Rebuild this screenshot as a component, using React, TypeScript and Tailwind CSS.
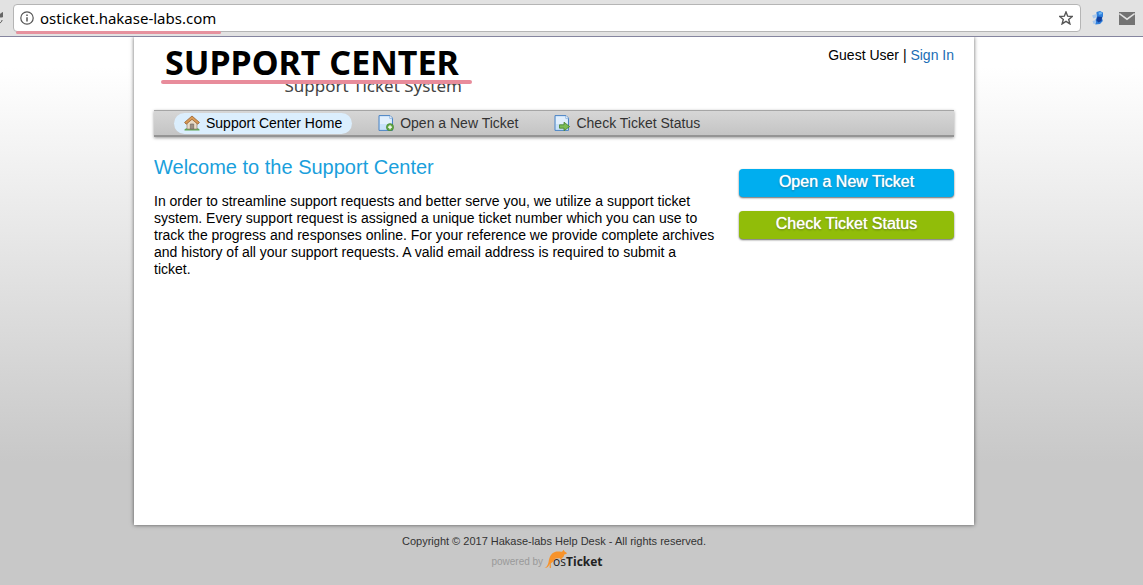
import React from "react";

function HomeIcon() {
  return (
    <svg width="16" height="16" viewBox="0 0 16 16" aria-hidden="true">
      <path d="M0.5 14.5c1-1.2 2.5-1.4 4-1.2h7c1.6-.2 3.2 0 4 1.2v1H0.500z" fill="#5fa552" />
      <path d="M3 7.500 8 3l5 4.500V14H3z" fill="#e9dcc8" stroke="#8f7f70" strokeWidth=".7" />
      <path d="M6.300 14V9h3.400v5z" fill="#9b9085" stroke="#6d6259" strokeWidth=".6" />
      <path d="M8 1 .6 7.400 2.200 9.200 8 4.300l5.800 4.900 1.600-1.800z" fill="#d99a55" stroke="#96602d" strokeWidth=".8" strokeLinejoin="round" />
    </svg>
  );
}

function PageShape() {
  return (
    <>
      <path d="M1 .6h11l2.500 2.500v12.300H1z" fill="#c9e2fa" stroke="#4a83c4" strokeWidth="1" strokeLinejoin="round" />
      <path d="M2 1.600h9.500v2.600h2V9H2z" fill="#f1f8ff" opacity=".6" />
      <path d="M11.800 .8v2.600h2.600" fill="#fff" stroke="#7aa6d8" strokeWidth=".7" />
    </>
  );
}

function NewTicketIcon() {
  return (
    <svg width="16" height="16" viewBox="0 0 16 16" aria-hidden="true">
      <PageShape />
      <circle cx="12" cy="12.200" r="3.600" fill="#62a845" stroke="#3e7d2a" strokeWidth=".6" />
      <path d="M12 10.200v4M10 12.200h4" stroke="#fff" strokeWidth="1.300" />
    </svg>
  );
}

function StatusIcon() {
  return (
    <svg width="16" height="16" viewBox="0 0 16 16" aria-hidden="true">
      <PageShape />
      <path d="M5.500 9.800h4.500V7.200l5.600 4.400-5.600 4.100v-2.500H5.500z" fill="#7cbc55" stroke="#447f2b" strokeWidth=".8" strokeLinejoin="round" />
    </svg>
  );
}

function BrowserBar() {
  return (
    <header className="flex h-[37px] shrink-0 items-center border-b border-[#85859f] bg-[#e2e2e2]">
      <svg className="mr-2 shrink-0" width="5" height="14" viewBox="0 0 5 14" aria-hidden="true">
        <path d="M0 3.500 2.500 1.500V6H0zM0 12c1.200-.6 1.900-1.600 2.200-3" fill="#666" stroke="#666" strokeWidth="1" />
      </svg>
      <div className="relative flex h-[28px] min-w-0 flex-1 items-center rounded-[4px] border border-[#b5b5b5] bg-white px-[6px]">
        <svg width="14" height="14" viewBox="0 0 14 14" fill="none" stroke="#555" aria-hidden="true">
          <circle cx="7" cy="7" r="6.200" strokeWidth="1.200" />
          <path d="M7 6.200v4.300M7 3.500v1.500" strokeWidth="1.500" />
        </svg>
        <input
          aria-label="Address"
          defaultValue="osticket.hakase-labs.com"
          className="ml-[6px] min-w-0 flex-1 bg-transparent pb-px font-['Noto_Sans',sans-serif] text-[15px] leading-5 text-black outline-none"
        />
        <button type="button" aria-label="Bookmark this page" className="mr-px">
          <svg width="14" height="14" viewBox="0 0 14 14" aria-hidden="true">
            <path d="M7 .9 8.700 5.200l4.500.3-3.500 2.900 1.200 4.500L7 10.400l-3.900 2.500 1.200-4.500L.8 5.500l4.500-.3z" fill="none" stroke="#555" strokeWidth="1.400" />
          </svg>
        </button>
        <span className="absolute -bottom-[3px] left-[2px] h-[3px] w-[205px] rounded-full bg-[#e6919e]" />
      </div>
      <button type="button" aria-label="Extension" className="ml-[10px]">
        <svg width="15" height="16" viewBox="0 0 15 16" aria-hidden="true">
          <path d="M5.500 2 9 1l3 1.500v4L11 8l.8 3L9 14l-4.500.5L3.500 12 5.500 8z" fill="#2f7fdc" />
          <path d="M6.500 6.500 11 7l-.5 4-3 1.500-2-2z" fill="#123f9c" />
          <path d="M1 5.500 5.500 4l.5 3L2.500 8.500zM1.500 11 5 10v3.500l-2.500.5z" fill="#a9c8ec" />
          <path d="M7.500 2.500l3-.5.500 2-3 .8z" fill="#6db8f5" />
        </svg>
      </button>
      <button type="button" aria-label="Mail" className="mr-2 ml-[13px]">
        <svg width="16" height="13" viewBox="0 0 16 13" aria-hidden="true">
          <path d="M0 0h16v13H0z" fill="#737373" />
          <path d="M.3 1.600 8 7.200l7.700-5.600" fill="none" stroke="#e2e2e2" strokeWidth="1.600" />
        </svg>
      </button>
    </header>
  );
}

function Logo() {
  return (
    <a href="#home" className="relative block w-[311px] pt-[2px] pl-[4px] font-['Noto_Sans',sans-serif]">
      <span className="block text-[34px] leading-[36px] font-bold whitespace-nowrap text-black">SUPPORT CENTER</span>
      <span className="block pr-[10px] text-right text-[17px] leading-[12px] whitespace-nowrap text-[#444]">Support Ticket System</span>
      <span className="absolute top-[38px] left-0 h-[4px] w-full rounded-full bg-[#e88c9b]" />
    </a>
  );
}

function NavBar() {
  const item = "flex h-[21px] items-center gap-[6px] rounded-full px-[10px] whitespace-nowrap";
  return (
    <nav className="mt-[18px] flex h-[27px] items-center gap-4 border-t border-b-2 border-t-[#a5a5a5] border-b-[#949494] bg-linear-to-b from-[#d6d6d6] to-[#c4c4c4] pl-5 text-[14px] text-[#333] shadow-[0_1px_3px_rgba(0,0,0,0.4)]">
      <a href="#home" className={`${item} bg-[#dbeefd] text-black`}><HomeIcon />Support Center Home</a>
      <a href="#open" className={item}><NewTicketIcon />Open a New Ticket</a>
      <a href="#status" className={item}><StatusIcon />Check Ticket Status</a>
    </nav>
  );
}

function OsTicketLogo() {
  return (
    <a href="#osticket" className="flex items-end justify-center pr-[14px] text-[#999]">
      <span className="mr-px text-[10px] leading-[14px]">powered by</span>
      <svg width="24" height="20" viewBox="0 0 25 20" className="-mr-[15px]" aria-hidden="true">
        <path d="M.5 19.500c2.200-.8 3.500-3 4.200-6C5.500 8.500 7 4 12 2.500c3-.9 5 .3 7-.3L20.500.3l.7 1.700 2.600 1.800c.4 1-1.500 1.300-2.600 1.500-.4 2-1.200 3.500-3.200 4l1.500 1.300-1 .7-2.200-2-4.300.2-3 3.700-2 1.500.2 4.800H6l-.2-4.500c-1 3-2.500 4.500-5.300 4.500z" fill="#f7932b" />
      </svg>
      <span className="relative font-['Open_Sans',sans-serif] text-[12px] leading-[14px] text-[#222]">os<b>Ticket</b></span>
    </a>
  );
}

export default function App() {
  const action = "block h-[28px] rounded-[4px] text-center text-[16px] leading-[26px] text-white shadow-[0_1px_2px_rgba(0,0,0,0.6)] [text-shadow:0_0_1px_#fff,0_1px_2px_rgba(0,0,0,0.4)]";
  return (
    <div className="flex min-h-screen flex-col font-['Liberation_Sans',Arial,sans-serif] text-black">
      <BrowserBar />
      <div className="flex flex-1 flex-col bg-linear-to-b from-white from-[30px] to-[#c8c8c8] to-[425px] pr-[35px]">
        <div className="mx-auto flex w-full max-w-[840px] flex-1 flex-col bg-white px-5 shadow-[0_0_4px_rgba(0,0,0,0.6)] [clip-path:inset(0_-8px_-8px_-8px)]">
          <div className="flex items-start justify-between pt-[5px] pl-[7px]">
            <Logo />
            <p className="mt-[3px] text-[14px] leading-5">Guest User | <a href="#signin" className="text-[#1a6db5]">Sign In</a></p>
          </div>
          <NavBar />
          <main className="flex justify-between gap-[23px] pt-[17px]">
            <section className="min-w-0 flex-1">
              <h1 className="text-[20px] leading-[26px] text-[#1a9fdc]">Welcome to the Support Center</h1>
              <p className="mt-[13px] text-[14px] leading-[17px]">
                In order to streamline support requests and better serve you, we utilize a support ticket system. Every support request is assigned a unique ticket number which you can use to track the progress and responses online. For your reference we provide complete archives and history of all your support requests. A valid email address is required to submit a ticket.
              </p>
            </section>
            <aside className="flex w-[215px] shrink-0 flex-col gap-[14px] pt-[15px]">
              <a href="#open" className={`${action} bg-[#00aeef]`}>Open a New Ticket</a>
              <a href="#status" className={`${action} bg-[#91bd09]`}>Check Ticket Status</a>
            </aside>
          </main>
        </div>
        <footer className="h-[60px] shrink-0 pt-[8px] text-center text-[11px] text-[#333]">
          <p className="leading-4">Copyright © 2017 Hakase-labs Help Desk - All rights reserved.</p>
          <OsTicketLogo />
        </footer>
      </div>
    </div>
  );
}
